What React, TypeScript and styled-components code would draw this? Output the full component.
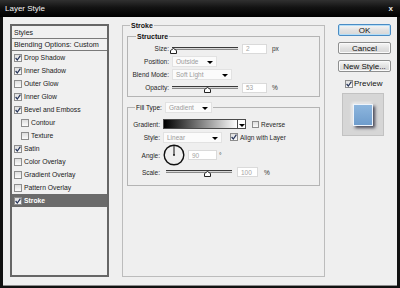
import React from "react";
import styled, { createGlobalStyle } from "styled-components";

const Global = createGlobalStyle`
  html, body { margin: 0; padding: 0; background: #000; }
  body { font-family: "Liberation Sans", Arial, sans-serif; }
  * { box-sizing: border-box; }
`;

const Window = styled.div`
  width: 400px;
  height: 288px;
  background: #111;
  display: flex;
  flex-direction: column;
  overflow: hidden;
`;

const TitleBar = styled.div`
  height: 17px;
  flex: none;
  display: flex;
  align-items: center;
  justify-content: space-between;
  padding: 0 7px 0 5px;
  background: linear-gradient(#303030 0%, #121212 45%, #000 100%);
  color: #f4f4f4;
  font-size: 8px;
`;

const Close = styled.span`
  font-weight: bold;
  font-size: 8px;
  color: #e8e8e8;
`;

const Body = styled.div`
  flex: 1;
  margin: 0 3px 2px 3px;
  background: #efefef;
  border-bottom: 1px solid #8c8c8c;
  display: flex;
  align-items: flex-start;
  padding: 7px 0 0 7px;
`;

const Sidebar = styled.div`
  width: 99px;
  height: 253px;
  border: 2px solid #666;
  background: #f0f0f0;
  display: flex;
  flex-direction: column;
  font-size: 6.8px;
  color: #1a1a1a;
`;

const SideHeader = styled.div<{ $h: number; $size: number }>`
  height: ${(p) => p.$h}px;
  flex: none;
  display: flex;
  align-items: center;
  padding-left: 2px;
  font-size: ${(p) => p.$size}px;
  border-bottom: 1px solid #7a7a7a;
`;

const Item = styled.div<{ $nested?: boolean; $selected?: boolean }>`
  height: 13px;
  flex: none;
  display: flex;
  align-items: center;
  gap: 2px;
  padding-left: ${(p) => (p.$nested ? 9 : 2)}px;
  background: ${(p) => (p.$selected ? "#6b6b6b" : "transparent")};
  color: ${(p) => (p.$selected ? "#fff" : "#1a1a1a")};
  font-weight: ${(p) => (p.$selected ? "bold" : "normal")};
`;

const Box = styled.span<{ $size?: number }>`
  width: ${(p) => p.$size ?? 8}px;
  height: ${(p) => p.$size ?? 8}px;
  flex: none;
  border: 1px solid #8d8d8d;
  background: linear-gradient(#dedede, #fbfbfb);
  display: flex;
  align-items: center;
  justify-content: center;
`;

const Check = ({ on, size }: { on: boolean; size?: number }) => (
  <Box $size={size}>
    {on && (
      <svg width="6" height="6" viewBox="0 0 6 6">
        <polyline points="0.6,3 2.3,5 5.4,0.6" fill="none" stroke="#27355a" strokeWidth="1.2" />
      </svg>
    )}
  </Box>
);

const Main = styled.fieldset`
  margin: -2px 0 0 13px;
  width: 203px;
  height: 255px;
  min-width: 0;
  border: 1px solid #bcbcbc;
  padding: 2px 4px 4px 4px;
  display: block;
`;

const Legend = styled.legend<{ $ml: number }>`
  margin-left: ${(p) => p.$ml}px;
  padding: 0 1px;
  font-size: 7px;
  font-weight: bold;
  color: #111;
  display: flex;
  align-items: center;
  gap: 3px;
`;

const LegendLabel = styled.span`
  font-weight: normal;
  font-size: 6.5px;
`;

const Group = styled.fieldset<{ $mt: number; $pt: number; $pb: number }>`
  margin: ${(p) => p.$mt}px 0 0 0;
  min-width: 0;
  border: 1px solid #b4b4b4;
  padding: ${(p) => p.$pt}px 4px ${(p) => p.$pb}px 4px;
  font-size: 6.5px;
  color: #1f1f1f;
`;

const Row = styled.div<{ $h: number }>`
  height: ${(p) => p.$h}px;
  display: flex;
  align-items: center;
`;

const Label = styled.span<{ $w: number }>`
  width: ${(p) => p.$w}px;
  flex: none;
  text-align: right;
  margin-right: 3px;
  white-space: nowrap;
`;

const SliderWrap = styled.div<{ $ml?: number }>`
  position: relative;
  width: 66px;
  height: 10px;
  flex: none;
  margin-left: ${(p) => p.$ml ?? 0}px;
`;

const Track = styled.div`
  margin-top: 3px;
  height: 3px;
  border-top: 1px solid #3a3a3a;
  border-bottom: 1px solid #8a8a8a;
  background: #d8d8d8;
`;

const Thumb = styled.svg`
  position: absolute;
  top: 4px;
  margin-left: -3px;
`;

const Slider = ({ value, ml }: { value: number; ml?: number }) => (
  <SliderWrap $ml={ml}>
    <Track />
    <Thumb width="7" height="6" viewBox="0 0 7 6" style={{ left: `${value}%` }}>
      <polygon points="3.5,0.5 6.5,2.5 6.5,5.5 0.5,5.5 0.5,2.5" fill="#fff" stroke="#222" strokeWidth="1" />
    </Thumb>
  </SliderWrap>
);

const Field = styled.div<{ $w: number; $ml: number }>`
  width: ${(p) => p.$w}px;
  height: 10px;
  flex: none;
  margin-left: ${(p) => p.$ml}px;
  background: #fff;
  border: 1px solid #dadada;
  color: #a4a4a4;
  padding-left: 3px;
  display: flex;
  align-items: center;
`;

const Unit = styled.span<{ $ml: number }>`
  margin-left: ${(p) => p.$ml}px;
  color: #333;
`;

const Select = styled.div<{ $w: number }>`
  width: ${(p) => p.$w}px;
  height: 11px;
  flex: none;
  background: #fbfbfb;
  border: 1px solid #e2e2e2;
  color: #9a9a9a;
  font-weight: normal;
  font-size: 6.5px;
  padding: 0 3px 0 3px;
  display: flex;
  align-items: center;
  justify-content: space-between;
`;

const Arrow = styled.span`
  width: 0;
  height: 0;
  border-left: 3px solid transparent;
  border-right: 3px solid transparent;
  border-top: 3px solid #000;
  margin-top: 2px;
`;

const Swatch = styled.div`
  width: 75px;
  height: 10px;
  flex: none;
  border: 1px solid #4a4a4a;
  background: linear-gradient(to right, #000, #fff);
`;

const SwatchBtn = styled.div`
  width: 8px;
  height: 10px;
  flex: none;
  border: 1px solid #4a4a4a;
  border-left: none;
  background: #fff;
  display: flex;
  align-items: center;
  justify-content: center;
`;

const Opt = styled.div<{ $ml: number }>`
  display: flex;
  align-items: center;
  gap: 2px;
  margin-left: ${(p) => p.$ml}px;
  color: #1f1f1f;
`;

const Buttons = styled.div`
  margin-left: 13px;
  width: 53px;
  display: flex;
  flex-direction: column;
  align-items: stretch;
`;

const Button = styled.div<{ $primary?: boolean; $mt: number }>`
  height: 12px;
  margin-top: ${(p) => p.$mt}px;
  border: 1px solid ${(p) => (p.$primary ? "#4a8cc4" : "#8e8f8f")};
  border-radius: 2px;
  background: linear-gradient(#f7f7f7, #e2e2e2 50%, #d6d6d6);
  box-shadow: ${(p) => (p.$primary ? "inset 0 0 0 1px #b4def8" : "inset 0 0 0 1px #fafafa")};
  font-size: 8px;
  color: #111;
  display: flex;
  align-items: center;
  justify-content: center;
`;

const PreviewRow = styled.div`
  margin-top: 7px;
  padding-left: 7px;
  display: flex;
  align-items: center;
  gap: 1px;
  font-size: 8px;
  color: #111;
  height: 9px;
`;

const PreviewBox = styled.div`
  margin: 5px 0 0 4px;
  width: 42px;
  height: 43px;
  background: #d6d6d6;
  border: 1px solid #c2c2c2;
  display: flex;
  align-items: center;
  justify-content: center;
`;

const PreviewSquare = styled.div`
  width: 20px;
  height: 22px;
  background: linear-gradient(#8db6de, #6e9ccc);
  border: 1px solid #eef4fb;
  box-shadow: 2px 2px 3px rgba(20, 20, 40, 0.75), -1px -1px 3px rgba(255, 255, 255, 0.9);
`;

const styles: { name: string; on: boolean; nested?: boolean; selected?: boolean }[] = [
  { name: "Drop Shadow", on: true },
  { name: "Inner Shadow", on: true },
  { name: "Outer Glow", on: false },
  { name: "Inner Glow", on: true },
  { name: "Bevel and Emboss", on: true },
  { name: "Contour", on: false, nested: true },
  { name: "Texture", on: false, nested: true },
  { name: "Satin", on: true },
  { name: "Color Overlay", on: false },
  { name: "Gradient Overlay", on: false },
  { name: "Pattern Overlay", on: false },
  { name: "Stroke", on: true, selected: true },
];

export default function App() {
  return (
    <>
      <Global />
      <Window>
        <TitleBar>
          <span>Layer Style</span>
          <Close>x</Close>
        </TitleBar>
        <Body>
          <Sidebar>
            <SideHeader $h={13} $size={7}>Styles</SideHeader>
            <SideHeader $h={12} $size={7.3}>Blending Options: Custom</SideHeader>
            {styles.map((s) => (
              <Item key={s.name} $nested={s.nested} $selected={s.selected}>
                <Check on={s.on} />
                <span>{s.name}</span>
              </Item>
            ))}
          </Sidebar>

          <Main>
            <Legend $ml={3}>Stroke</Legend>
            <Group $mt={2} $pt={2} $pb={2}>
              <Legend $ml={4}>Structure</Legend>
              <Row $h={13}>
                <Label $w={37}>Size:</Label>
                <Slider value={1} />
                <Field $w={25} $ml={4}>2</Field>
                <Unit $ml={5}>px</Unit>
              </Row>
              <Row $h={13}>
                <Label $w={37}>Position:</Label>
                <Select $w={45}>
                  Outside <Arrow />
                </Select>
              </Row>
              <Row $h={13}>
                <Label $w={37}>Blend Mode:</Label>
                <Select $w={60}>
                  Soft Light <Arrow />
                </Select>
              </Row>
              <Row $h={13}>
                <Label $w={37}>Opacity:</Label>
                <Slider value={53} />
                <Field $w={25} $ml={4}>53</Field>
                <Unit $ml={5}>%</Unit>
              </Row>
            </Group>

            <Group $mt={5} $pt={5} $pb={7}>
              <Legend $ml={3}>
                <LegendLabel>Fill Type:</LegendLabel>
                <Select $w={47}>
                  Gradient <Arrow />
                </Select>
              </Legend>
              <Row $h={12}>
                <Label $w={28}>Gradient:</Label>
                <Swatch />
                <SwatchBtn>
                  <Arrow />
                </SwatchBtn>
                <Opt $ml={6}>
                  <Check on={false} size={7} />
                  <span>Reverse</span>
                </Opt>
              </Row>
              <Row $h={14}>
                <Label $w={28}>Style:</Label>
                <Select $w={59}>
                  Linear <Arrow />
                </Select>
                <Opt $ml={8}>
                  <Check on size={8} />
                  <span>Align with Layer</span>
                </Opt>
              </Row>
              <Row $h={22}>
                <Label $w={28}>Angle:</Label>
                <svg width="22" height="22" viewBox="0 0 22 22">
                  <circle cx="11" cy="11" r="9.8" fill="none" stroke="#111" strokeWidth="1.4" />
                  <line x1="11" y1="11" x2="11" y2="2" stroke="#111" strokeWidth="1" />
                  <circle cx="11" cy="11" r="0.9" fill="#111" />
                </svg>
                <Field $w={29} $ml={3}>90</Field>
                <Unit $ml={2}>°</Unit>
              </Row>
              <Row $h={12}>
                <Label $w={28}>Scale:</Label>
                <Slider value={62} ml={3} />
                <Field $w={21} $ml={5}>100</Field>
                <Unit $ml={6}>%</Unit>
              </Row>
            </Group>
          </Main>

          <Buttons>
            <Button $primary $mt={0}>OK</Button>
            <Button $mt={6}>Cancel</Button>
            <Button $mt={6}>New Style...</Button>
            <PreviewRow>
              <Check on size={8} />
              <span>Preview</span>
            </PreviewRow>
            <PreviewBox>
              <PreviewSquare />
            </PreviewBox>
          </Buttons>
        </Body>
      </Window>
    </>
  );
}
